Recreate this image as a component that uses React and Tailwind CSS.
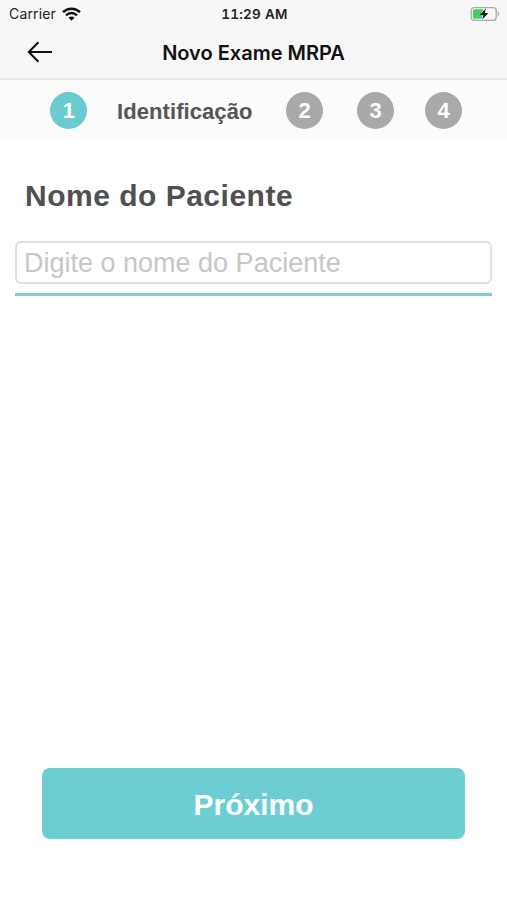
function StatusBar() {
  return (
    <div className="grid h-[28px] grid-cols-3 items-center pl-[9px] pr-[7px] font-['Inter',sans-serif] text-[#222]">
      <div className="flex items-center gap-[6px]">
        <span className="text-[14px] leading-[18px] tracking-[0.15px]">Carrier</span>
        <svg width="19" height="14" viewBox="0 0 19 14" fill="none" stroke="#111" strokeWidth="2.5">
          <path d="M1 5.1C5.8.5 13.2.5 18 5.1" />
          <path d="M4 8.3c3.2-3 7.8-3 11 0" />
          <path d="M6.5 10.7c1.7-1.6 4.3-1.6 6 0l-3 3z" fill="#111" stroke="none" />
        </svg>
      </div>
      <span className="whitespace-nowrap text-center text-[13.5px] font-semibold tabular-nums leading-[18px] tracking-[0.25px]">11:29 AM</span>
      <svg className="justify-self-end" width="30" height="16" viewBox="0 0 30 16" fill="none">
        <rect x="1.2" y="1.7" width="25" height="12.6" rx="3" stroke="#aaa" strokeWidth="1.3" />
        <path d="M4.5 3.3h9L10.3 9h2.3l-1.2 3.8H4.5a1.6 1.6 0 0 1-1.6-1.6V4.9a1.6 1.6 0 0 1 1.6-1.6Z" fill="#3fce68" />
        <path d="M27.7 5.5c2 .7 2 4.3 0 5Z" fill="#aaa" />
        <path d="M15.8 2.5 9.8 9h3.6l-1.1 4.6L18.3 7h-3.5z" fill="#111" />
      </svg>
    </div>
  );
}

function Step({ number, className }) {
  return (
    <div className={`flex size-[37px] shrink-0 items-center justify-center rounded-full text-[22px] font-bold leading-[24px] text-white ${className}`}>
      <span className="pt-px">{number}</span>
    </div>
  );
}

export default function App() {
  return (
    <div className="flex h-[900px] w-[507px] flex-col bg-white font-['Liberation_Sans',sans-serif]">
      <header className="h-[80px] shrink-0 border-b-2 border-[#e6e6e6] bg-[#f7f7f7]">
        <StatusBar />
        <div className="grid h-[48px] grid-cols-[1fr_auto_1fr] items-center">
          <button aria-label="Voltar" className="ml-[27px] w-[26px]">
            <svg width="26" height="22" viewBox="0 0 26 22" fill="none" stroke="#111" strokeWidth="2">
              <path d="M11.5 1.2 1.7 11l9.8 9.8M1.7 11H25" />
            </svg>
          </button>
          <h1 className="pt-px font-['Inter',sans-serif] text-[20px] font-semibold leading-[24px] text-[#111]">Novo Exame MRPA</h1>
        </div>
      </header>

      <nav className="flex h-[60px] shrink-0 items-center bg-[#fbfbfb] pb-[2px] pl-[50px] pt-[3px]">
        <Step number="1" className="bg-[#69cbd0]" />
        <span className="ml-[30px] w-[170px] pt-[2px] text-[22px] font-bold leading-[26px] tracking-[0.08px] text-[#555]">Identificação</span>
        <Step number="2" className="-ml-px bg-[#a9a9a9]" />
        <Step number="3" className="ml-[34px] bg-[#a9a9a9]" />
        <Step number="4" className="ml-[31px] bg-[#a9a9a9]" />
      </nav>

      <main className="flex flex-1 flex-col pt-[38px]">
        <label htmlFor="patient" className="ml-[25px] text-[30px] font-bold leading-[36px] tracking-[0.5px] text-[#505050]">Nome do Paciente</label>
        <div className="mx-[15px] mt-[27px] border-b-[3px] border-[#7fcbd2] pb-[9px]">
          <input
            id="patient"
            placeholder="Digite o nome do Paciente"
            className="block h-[43px] w-full rounded-[6px] border-2 border-[#e0e0e0] bg-white px-[7px] pt-[2px] text-[27px] text-[#505050] outline-none placeholder:text-[#c7c7c7] placeholder:opacity-100"
          />
        </div>
        <button className="mx-[42px] mb-[61px] mt-auto h-[71px] rounded-[8px] bg-[#6ccdd2] pt-px text-[30px] font-bold text-white">Próximo</button>
      </main>
    </div>
  );
}
